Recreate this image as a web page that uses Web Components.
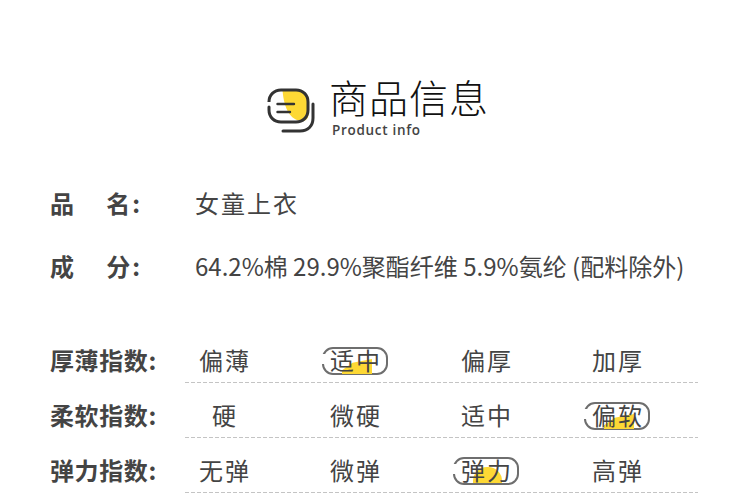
<!DOCTYPE html>
<html lang="zh"><head><meta charset="utf-8">
<style>
html,body{margin:0;padding:0;background:#fff}
body{width:750px;height:498px;overflow:hidden;font-family:"Noto Sans CJK SC","Noto Sans",sans-serif;color:#444}
</style></head><body>
<product-info></product-info>
<template id="t-title">
<style>
:host{display:flex;height:99px;padding:72px 0 0 267px;box-sizing:content-box;gap:14px;align-items:flex-start}
svg{width:48px;height:48px;margin-top:15px;flex:none}
.txt{display:flex;flex-direction:column}
.zh{font-size:39px;line-height:48px;letter-spacing:1px;font-weight:300;color:#111;white-space:nowrap}
.en{font:600 13.500px/16px "Open Sans",sans-serif;letter-spacing:.7px;color:#444;margin:2px 0 0 3px;white-space:nowrap}
</style>
<svg viewBox="0 0 48 48" fill="none">
<path d="M15.500 3 H28 C36 3 41.500 9 41.500 17 V27 C41.500 32 38 35 33.500 34 C24 32.500 17 23 15.500 3Z" fill="#fdd835"/>
<path d="M2 20 V23 C2 30 7 35 14 35 H29 C36 35 41 30 41 23 V15 C41 8 36 3 29 3 H14 C7 3 2 8 2 15 V14" stroke="#333" stroke-width="3" stroke-linecap="round"/>
<path d="M46 17 V31 C46 39 41 44 33 44 H16" stroke="#333" stroke-width="3" stroke-linecap="round"/>
<path d="M10.500 17 H27 M10.500 25 H23" stroke="#333" stroke-width="2.400" stroke-linecap="round"/>
</svg>
<div class="txt"><div class="zh"><slot name="zh"></slot></div><div class="en"><slot name="en"></slot></div></div>
</template>
<template id="t-attr">
<style>
:host{display:grid;grid-template-columns:145px 1fr;align-items:center;height:63px;padding-left:50px}
.k{font-weight:700;font-size:24px;line-height:32px;letter-spacing:2px;display:flex;width:92px;justify-content:space-between}
.v{font-size:24px;line-height:32px;white-space:nowrap}
</style>
<div class="k"><slot name="k"></slot></div><div class="v"><slot name="v"></slot></div>
</template>
<template id="t-row">
<style>
:host{display:grid;grid-template-columns:135px 513px;height:55px;padding-left:50px}
.k{font-weight:700;font-size:24px;line-height:32px;letter-spacing:.6px;padding-top:16px;white-space:nowrap}
.opts{display:grid;grid-template-columns:repeat(4,78px);column-gap:53px;box-sizing:border-box;height:55px;padding-top:16px;align-content:start;
background:repeating-linear-gradient(90deg,#c4c4c4 0 4px,transparent 4px 6px) left bottom/100% 1px no-repeat}
</style>
<div class="k"><slot name="k"></slot></div><div class="opts"><slot></slot></div>
</template>
<template id="t-opt">
<style>
:host{display:block;position:relative;text-align:center;font-size:24px;line-height:32px;letter-spacing:2px;text-indent:2px;white-space:nowrap}
span{position:relative}
.pill{display:none;position:absolute;left:50%;top:3px;width:66px;height:28px;margin-left:-33px;box-sizing:border-box;border:2px solid #6e6e6e;border-radius:11px;background:#fff}
.pill::before{content:"";position:absolute;left:-3px;top:5px;width:6px;height:10px;background:#fff}
.pill::after{content:"";position:absolute;background:#fdd835}
:host([on]) .pill{display:block}
:host([on="a"]) .pill::after{left:18px;top:10px;width:30px;height:15px;clip-path:polygon(0 100%,0 75%,35% 25%,100% 0,100% 100%)}
:host([on="b"]) .pill::after{left:18px;top:8px;width:29px;height:16px;border-radius:14px 14px 0 0}
</style>
<div class="pill"></div><span><slot></slot></span>
</template>
<script>
function def(name,id){customElements.define(name,class extends HTMLElement{constructor(){super();this.attachShadow({mode:'open'}).appendChild(document.getElementById(id).content.cloneNode(true));}});}
def('pi-title','t-title');def('pi-attr','t-attr');def('pi-row','t-row');def('pi-opt','t-opt');
customElements.define('product-info',class extends HTMLElement{constructor(){super();const r=this.attachShadow({mode:'open'});
const row=(k,o,on,kind)=>`<pi-row><span slot="k">${k}</span>${o.map((t,i)=>`<pi-opt${i===on?` on="${kind}"`:''}>${t}</pi-opt>`).join('')}</pi-row>`;
r.innerHTML=`<style>:host{display:block}.g{height:31px}</style>
<pi-title><span slot="zh">商品信息</span><span slot="en">Product info</span></pi-title>
<pi-attr><span slot="k">品</span><span slot="k">名:</span><span slot="v" style="letter-spacing:2px">女童上衣</span></pi-attr>
<pi-attr><span slot="k">成</span><span slot="k">分:</span><span slot="v">64.2%棉 29.9%聚酯纤维 5.9%氨纶 (配料除外)</span></pi-attr>
<div class="g"></div>
${row('厚薄指数:',['偏薄','适中','偏厚','加厚'],1,'a')}
${row('柔软指数:',['硬','微硬','适中','偏软'],3,'a')}
${row('弹力指数:',['无弹','微弹','弹力','高弹'],2,'b')}`;}});
</script>
</body></html>
